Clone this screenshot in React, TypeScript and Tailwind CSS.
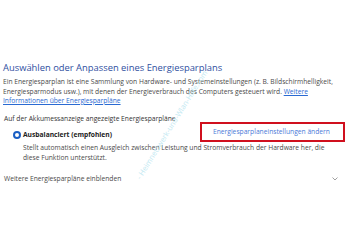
export default function App() {
  return (
    <div
      className="relative w-[350px] h-[250px] overflow-hidden bg-white pt-[62px] pl-[3px] pr-[5px] text-[#4a4a4a]"
      style={{ fontFamily: '"Open Sans", "Noto Sans", sans-serif' }}
    >
      <h1 className="text-[9.4px] leading-[12px] text-[#2f4f9f] font-normal">
        Auswählen oder Anpassen eines Energiesparplans
      </h1>

      <p className="mt-[3px] text-[6.7px] leading-[9.5px] whitespace-nowrap">
        Ein Energiesparplan ist eine Sammlung von Hardware- und Systemeinstellungen (z. B. Bildschirmhelligkeit,
        <br />
        Energiesparmodus usw.), mit denen der Energieverbrauch des Computers gesteuert wird.{' '}
        <a className="text-[#2a6ad2] underline">Weitere</a>
        <br />
        <a className="text-[#2a6ad2] underline">Informationen über Energiesparpläne</a>
      </p>

      <div className="mt-[8px] pl-[1px] text-[6.7px] leading-[9.5px] text-[#333333]">
        Auf der Akkumessanzeige angezeigte Energiesparpläne
      </div>

      <div className="-mt-[1px] flex items-start justify-between">
        <div className="mt-[8px] ml-[10px] flex items-center gap-[2px]">
          <span className="w-[8px] h-[8px] rounded-full border-[2px] border-[#1a5fc4] bg-white"></span>
          <span className="text-[6.7px] leading-[10px] font-bold text-[#222222]">Ausbalanciert (empfohlen)</span>
        </div>
        <div className="w-[145px] h-[20px] border-[2px] border-[#d0101e] flex items-center pl-[11px]">
          <a className="text-[6.7px] text-[#4a7ad8]">Energiesparplaneinstellungen ändern</a>
        </div>
      </div>

      <p className="mt-[1px] ml-[20px] text-[6.7px] leading-[9.5px] whitespace-nowrap">
        Stellt automatisch einen Ausgleich zwischen Leistung und Stromverbrauch der Hardware her, die
        <br />
        diese Funktion unterstützt.
      </p>

      <div className="mt-[12px] pl-[1px] flex items-center justify-between pr-[7px]">
        <span className="text-[6.7px] leading-[9.5px]">Weitere Energiesparpläne einblenden</span>
        <svg width="6" height="4" viewBox="0 0 6 4" fill="none" stroke="#888888" strokeWidth="0.8">
          <path d="M0.5 0.5 L3 3 L5.5 0.5" />
        </svg>
      </div>

      <div className="absolute left-[172px] top-[125px] -translate-x-1/2 -translate-y-1/2 -rotate-[58deg] whitespace-nowrap text-[7.5px] text-[#c2e9f2] pointer-events-none">
        - Heimnetzwerk-und-Wlan-Hilfe.com
      </div>
    </div>
  );
}
